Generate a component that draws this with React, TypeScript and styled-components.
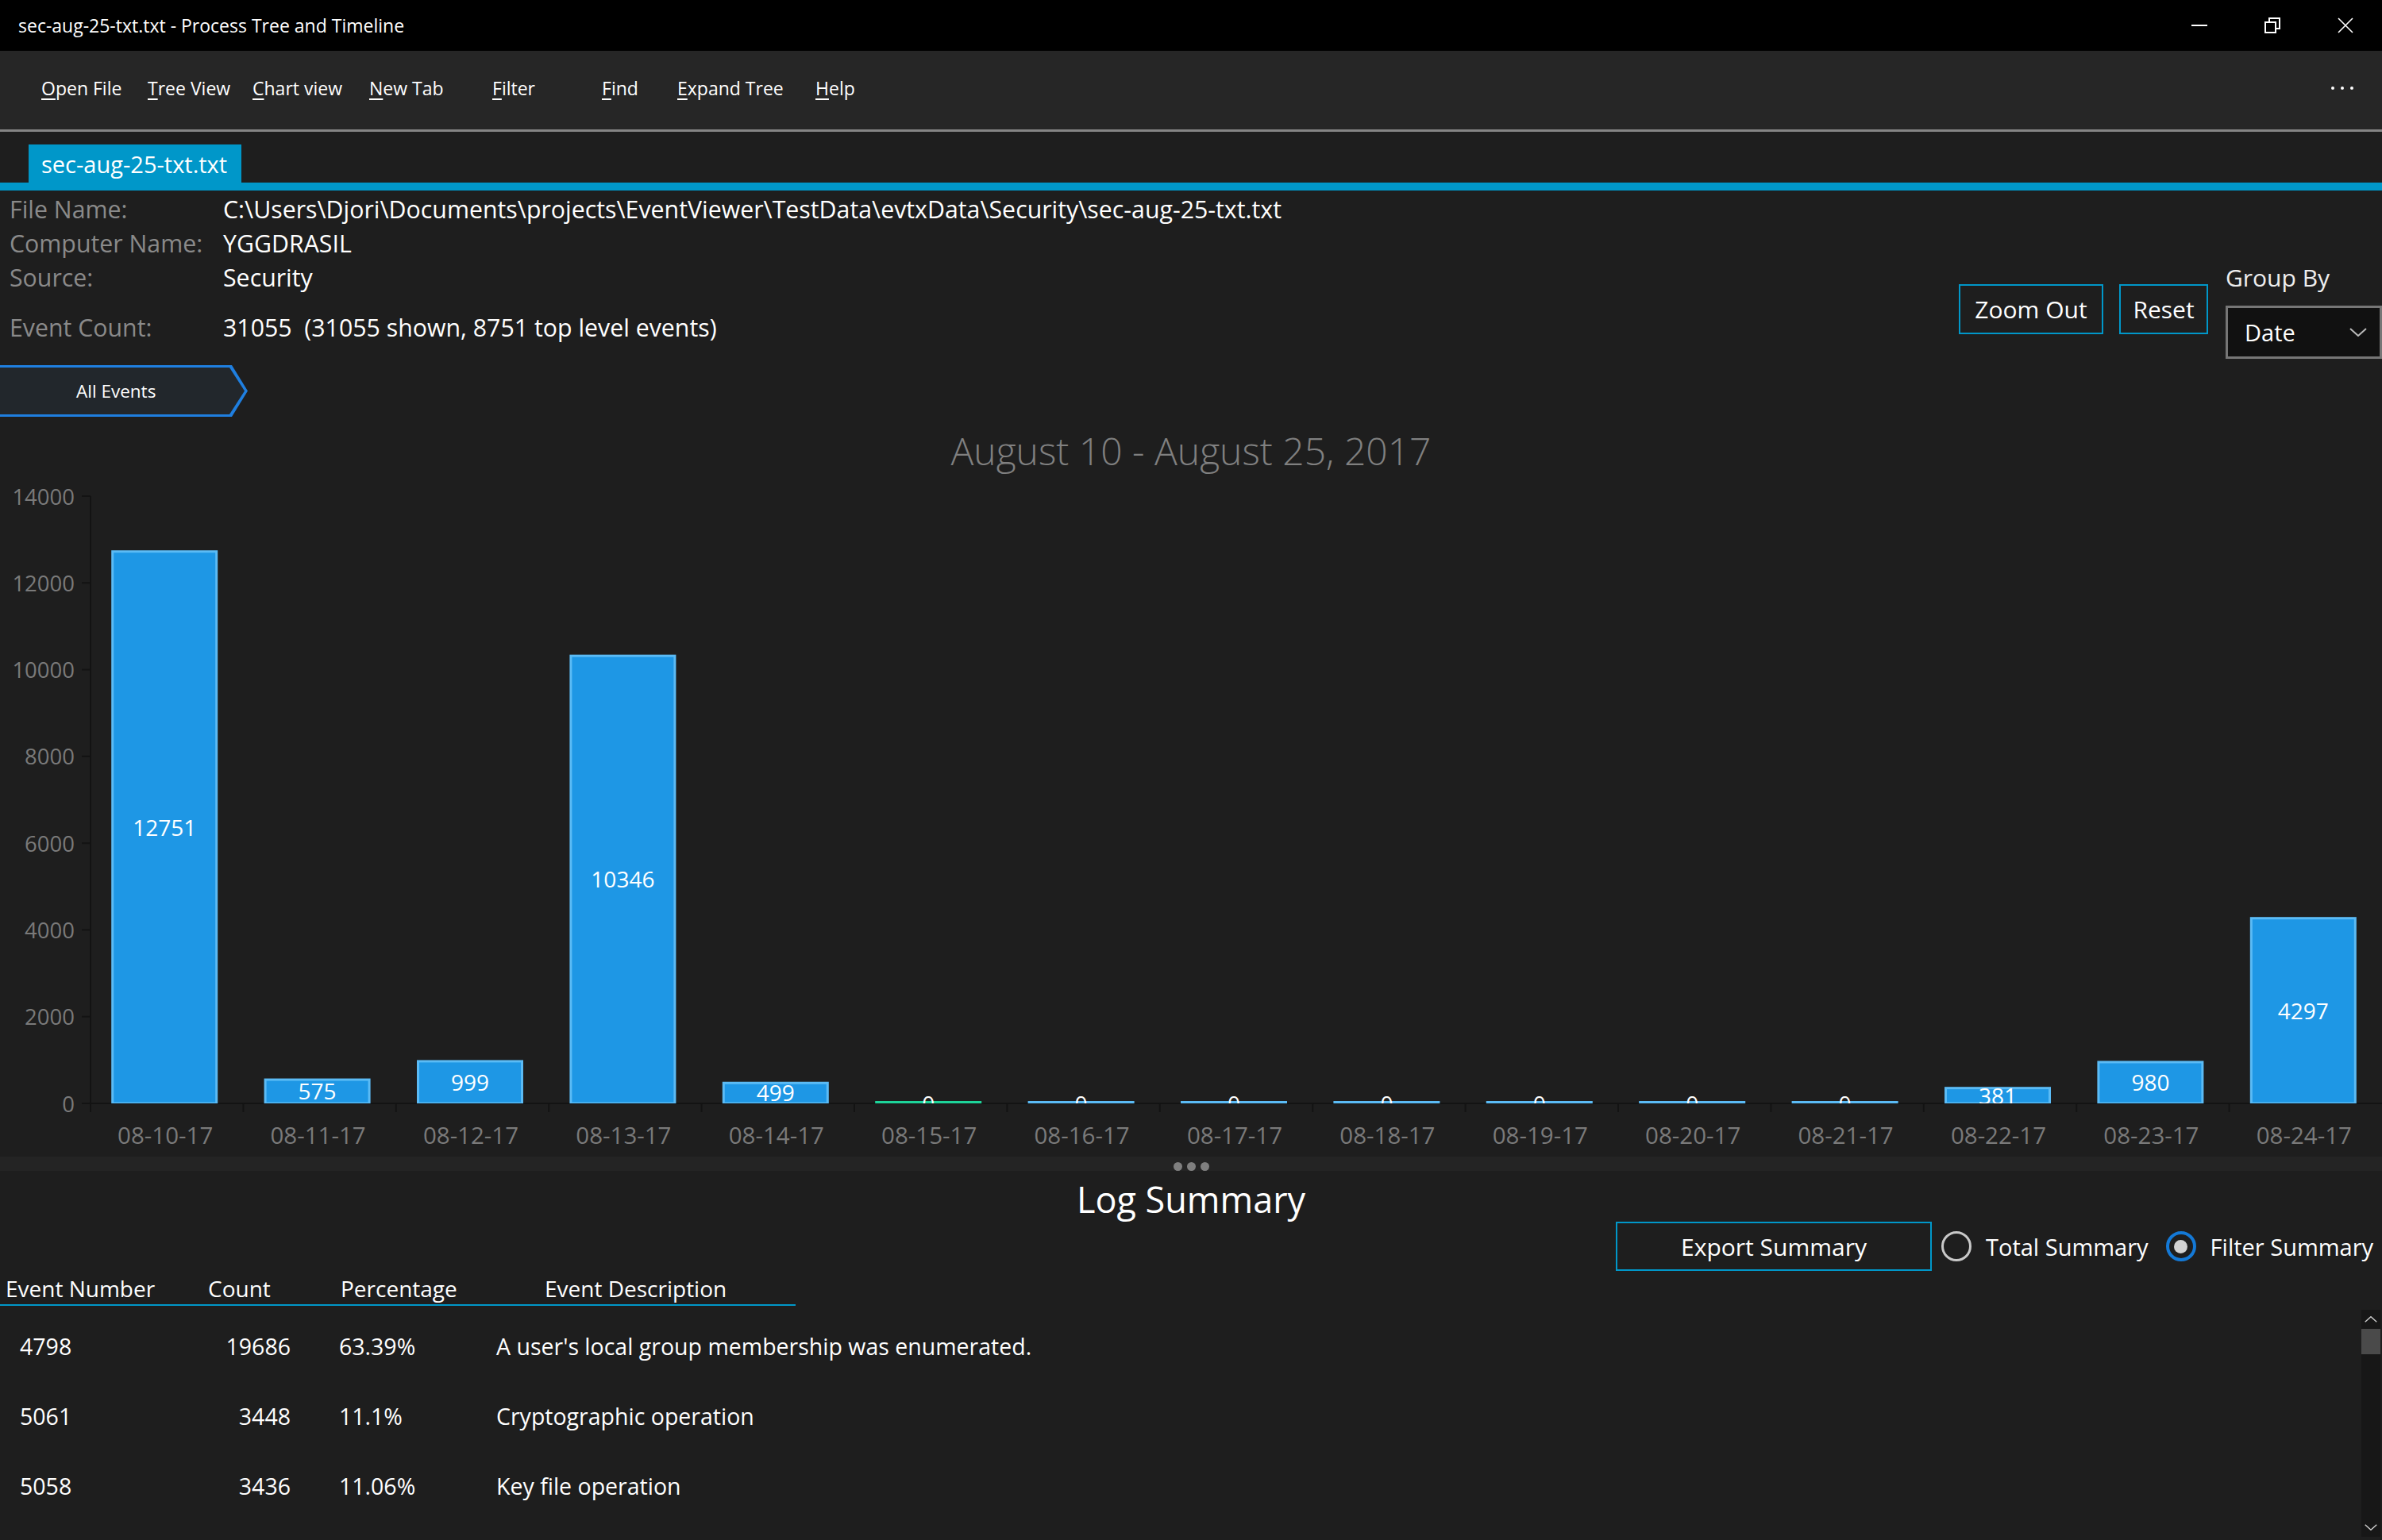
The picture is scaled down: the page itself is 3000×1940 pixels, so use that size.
import * as React from 'react'
import styled, { createGlobalStyle } from 'styled-components'

const GlobalStyle = createGlobalStyle`
  html, body {
    margin: 0;
    padding: 0;
    background: #1e1e1e;
  }
  body {
    font-family: 'Open Sans', 'Noto Sans', sans-serif;
    color: #fff;
  }
`

const Window = styled.div`
  width: 3000px;
  height: 1940px;
  display: flex;
  flex-direction: column;
  background: #1e1e1e;
  overflow: hidden;
`

const TitleBar = styled.div`
  height: 64px;
  flex: none;
  background: #000;
  display: flex;
  align-items: center;
  padding-left: 23px;
`

const TitleText = styled.div`
  flex: 1;
  font-size: 23px;
  color: #fff;
`

const WindowButton = styled.div`
  width: 92px;
  height: 64px;
  display: flex;
  align-items: center;
  justify-content: center;
`

const MenuBar = styled.div`
  height: 102px;
  flex: none;
  background: #262626;
  border-bottom: 3px solid #858585;
  display: flex;
  align-items: center;
  padding: 0 36px 6px 52px;
  box-sizing: border-box;
`

const MenuItem = styled.div<{ width?: number }>`
  width: ${(p) => (p.width ? `${p.width}px` : 'auto')};
  font-size: 23px;
  color: #fff;
  white-space: nowrap;
  u {
    text-underline-offset: 4px;
  }
`

const MoreDots = styled.div`
  margin-left: auto;
  display: flex;
  gap: 8px;
  span {
    width: 4px;
    height: 4px;
    border-radius: 50%;
    background: #fff;
  }
`

const TabStrip = styled.div`
  flex: none;
  padding: 16px 0 0 36px;
`

const Tab = styled.div`
  width: 268px;
  height: 48px;
  background: #0097c9;
  color: #fff;
  font-size: 29px;
  display: flex;
  align-items: center;
  padding-left: 16px;
  box-sizing: border-box;
`

const TabLine = styled.div`
  height: 10px;
  flex: none;
  background: #0097c9;
`

const Header = styled.div`
  flex: none;
  height: 200px;
  display: flex;
  justify-content: space-between;
`

const InfoGrid = styled.div`
  padding: 2px 0 0 12px;
`

const InfoRow = styled.div<{ gapTop?: number }>`
  display: grid;
  grid-template-columns: 269px auto;
  height: 43px;
  align-items: center;
  margin-top: ${(p) => p.gapTop ?? 0}px;
  font-size: 30.3px;
  white-space: nowrap;
`

const InfoLabel = styled.span`
  color: #8a8a8a;
`

const InfoValue = styled.span`
  color: #fff;
`

const Controls = styled.div`
  display: flex;
  align-items: flex-start;
  gap: 20px;
`

const OutlineButton = styled.div<{ width: number; height?: number; top?: number }>`
  flex: none;
  width: ${(p) => p.width}px;
  height: ${(p) => p.height ?? 63}px;
  margin-top: ${(p) => p.top ?? 0}px;
  box-sizing: border-box;
  border: 2px solid #0097c9;
  display: flex;
  align-items: center;
  justify-content: center;
  font-size: 30px;
  color: #fff;
  white-space: nowrap;
`

const GroupColumn = styled.div`
  width: 197px;
  margin-top: 90px;
  margin-left: 2px;
`

const GroupLabel = styled.div`
  height: 40px;
  line-height: 40px;
  font-size: 30px;
  color: #eee;
`

const Combo = styled.div`
  margin-top: 15px;
  height: 67px;
  box-sizing: border-box;
  border: 3px solid #767676;
  background: #111;
  display: flex;
  align-items: center;
  justify-content: space-between;
  padding: 0 16px 0 21px;
  font-size: 29px;
  color: #fff;
`

const Crumb = styled.div`
  flex: none;
  margin-top: 20px;
  width: 312px;
  height: 65px;
  background: #1f7fe0;
  clip-path: polygon(0 0, 292px 0, 312px 50%, 292px 100%, 0 100%);
  padding-top: 3px;
  box-sizing: border-box;
`

const CrumbInner = styled.div`
  width: 308px;
  height: 59px;
  background: #22272c;
  clip-path: polygon(0 0, 289px 0, 308px 50%, 289px 100%, 0 100%);
  display: flex;
  align-items: center;
  padding-left: 96px;
  box-sizing: border-box;
  font-size: 22.5px;
  color: #fff;
`

const ChartTitle = styled.div`
  flex: none;
  margin-top: 13px;
  height: 60px;
  line-height: 60px;
  text-align: center;
  font-size: 48px;
  font-weight: 300;
  color: #808080;
`

const ChartSvg = styled.svg`
  flex: none;
  display: block;
  text {
    font-family: 'Open Sans', 'Noto Sans', sans-serif;
  }
`

const Splitter = styled.div`
  flex: none;
  height: 18px;
  background: #242424;
  display: flex;
  justify-content: center;
  align-items: center;
  gap: 6px;
  overflow: hidden;
  span {
    width: 11px;
    height: 11px;
    border-radius: 50%;
    background: #7f7f7f;
    margin-top: 6px;
  }
`

const SummaryTitle = styled.div`
  flex: none;
  margin-top: 8px;
  height: 56px;
  line-height: 56px;
  text-align: center;
  font-size: 45px;
  color: #fff;
`

const SummaryControls = styled.div`
  flex: none;
  display: flex;
  align-items: center;
  gap: 12px;
  padding-left: 2035px;
  white-space: nowrap;
`

const Radio = styled.div`
  flex: none;
  display: flex;
  align-items: center;
  gap: 18px;
  font-size: 29px;
  color: #fff;
  & + & {
    margin-left: 10px;
  }
`

const RadioCircle = styled.div<{ checked?: boolean }>`
  flex: none;
  width: 38px;
  height: 38px;
  box-sizing: border-box;
  border-radius: 50%;
  border: ${(p) => (p.checked ? '4px solid #1479d6' : '3px solid #c8c8c8')};
  display: flex;
  align-items: center;
  justify-content: center;
  &::after {
    content: '';
    display: ${(p) => (p.checked ? 'block' : 'none')};
    width: 17px;
    height: 17px;
    border-radius: 50%;
    background: #d2d2d2;
  }
`

const TableHeader = styled.div`
  flex: none;
  margin-top: 2px;
  width: 995px;
  height: 40px;
  border-bottom: 2px solid #0097c9;
  display: grid;
  grid-template-columns: 255px 167px 257px auto;
  align-items: center;
  padding-left: 7px;
  box-sizing: content-box;
  font-size: 28px;
  color: #fff;
  white-space: nowrap;
`

const TableBody = styled.div`
  flex: none;
  margin-top: 5px;
  display: flex;
  height: 286px;
`

const Rows = styled.div`
  flex: 1;
  padding-top: 2px;
`

const Row = styled.div`
  display: grid;
  grid-template-columns: 200px 141px 259px 1fr;
  height: 88px;
  align-items: center;
  padding-left: 25px;
  font-size: 28.5px;
  color: #fff;
  white-space: nowrap;
`

const Cell = styled.span<{ align?: 'right'; pad?: number }>`
  text-align: ${(p) => p.align ?? 'left'};
  padding-left: ${(p) => p.pad ?? 0}px;
`

const ScrollBar = styled.div`
  width: 24px;
  margin-right: 2px;
  background: #171717;
  display: flex;
  flex-direction: column;
  align-items: center;
`

const ScrollArrow = styled.div`
  height: 24px;
  display: flex;
  align-items: center;
  justify-content: center;
`

const Thumb = styled.div`
  width: 24px;
  height: 32px;
  background: #4a4a4a;
`

const ScrollTrack = styled.div`
  flex: 1;
`

const menu = [
  { key: 'O', rest: 'pen File', width: 134 },
  { key: 'T', rest: 'ree View', width: 132 },
  { key: 'C', rest: 'hart view', width: 147 },
  { key: 'N', rest: 'ew Tab', width: 155 },
  { key: 'F', rest: 'ilter', width: 138 },
  { key: 'F', rest: 'ind', width: 95 },
  { key: 'E', rest: 'xpand Tree', width: 174 },
  { key: 'H', rest: 'elp' },
]

const data = [
  { date: '08-10-17', count: 12751 },
  { date: '08-11-17', count: 575 },
  { date: '08-12-17', count: 999 },
  { date: '08-13-17', count: 10346 },
  { date: '08-14-17', count: 499 },
  { date: '08-15-17', count: 0, selected: true },
  { date: '08-16-17', count: 0 },
  { date: '08-17-17', count: 0 },
  { date: '08-18-17', count: 0 },
  { date: '08-19-17', count: 0 },
  { date: '08-20-17', count: 0 },
  { date: '08-21-17', count: 0 },
  { date: '08-22-17', count: 381 },
  { date: '08-23-17', count: 980 },
  { date: '08-24-17', count: 4297 },
]

const summary = [
  { id: '4798', count: '19686', pct: '63.39%', desc: "A user's local group membership was enumerated." },
  { id: '5061', count: '3448', pct: '11.1%', desc: 'Cryptographic operation' },
  { id: '5058', count: '3436', pct: '11.06%', desc: 'Key file operation' },
]

const CHART_H = 859
const PLOT_LEFT = 114
const PLOT_RIGHT = 3000
const Y0 = 792
const Y_TOP = 27
const MAX = 14000
const CAT_W = (PLOT_RIGHT - PLOT_LEFT) / data.length
const BAR_W = 134

const yFor = (v: number) => Y0 - ((Y0 - Y_TOP) * v) / MAX

const BarChart: React.FC = () => {
  const ticks = [0, 2000, 4000, 6000, 8000, 10000, 12000, 14000]
  return (
    <ChartSvg width={3000} height={CHART_H} viewBox={`0 0 3000 ${CHART_H}`}>
      <defs>
        <clipPath id="plot">
          <rect x={PLOT_LEFT} y={0} width={PLOT_RIGHT - PLOT_LEFT} height={Y0} />
        </clipPath>
      </defs>
      {ticks.map((t) => (
        <g key={t}>
          <line x1={103} x2={PLOT_LEFT} y1={yFor(t)} y2={yFor(t)} stroke="#131313" strokeWidth={2} />
          <text x={94} y={yFor(t)} fill="#7a7a7a" fontSize={27.5} textAnchor="end" dominantBaseline="central">
            {t}
          </text>
        </g>
      ))}
      <line x1={PLOT_LEFT} x2={PLOT_LEFT} y1={Y_TOP} y2={Y0 + 10} stroke="#131313" strokeWidth={2} />
      <line x1={PLOT_LEFT} x2={PLOT_RIGHT} y1={Y0} y2={Y0} stroke="#131313" strokeWidth={2} />
      {data.map((d, i) => (
        <line
          key={`t${i}`}
          x1={PLOT_LEFT + i * CAT_W}
          x2={PLOT_LEFT + i * CAT_W}
          y1={Y0}
          y2={Y0 + 11}
          stroke="#131313"
          strokeWidth={2}
        />
      ))}
      <g clipPath="url(#plot)">
        {data.map((d, i) => {
          const cx = PLOT_LEFT + (i + 0.5) * CAT_W - 3
          const top = yFor(d.count)
          const h = Math.max(Y0 - top, 3)
          const fill = d.selected ? '#1ed49a' : '#1e97e5'
          const stroke = d.selected ? '#1ed49a' : '#5bbbf5'
          return (
            <g key={d.date}>
              {d.count > 0 ? (
                <rect
                  x={cx - BAR_W / 2 + 1.5}
                  y={top + 1.5}
                  width={BAR_W - 3}
                  height={h - 1.5}
                  fill={fill}
                  stroke={stroke}
                  strokeWidth={3}
                />
              ) : (
                <rect x={cx - BAR_W / 2} y={Y0 - 3} width={BAR_W} height={3} fill={stroke} />
              )}
              <text
                x={cx}
                y={Y0 - (Y0 - top) / 2}
                fill="#fff"
                fontSize={28}
                textAnchor="middle"
                dominantBaseline="central"
              >
                {d.count}
              </text>
            </g>
          )
        })}
      </g>
      {data.map((d, i) => (
        <text
          key={`l${i}`}
          x={PLOT_LEFT + (i + 0.5) * CAT_W - 2}
          y={831}
          fill="#7a7a7a"
          fontSize={29.5}
          textAnchor="middle"
          dominantBaseline="central"
        >
          {d.date}
        </text>
      ))}
    </ChartSvg>
  )
}

const Chevron: React.FC<{ up?: boolean; size?: number; color?: string }> = ({ up, size = 22, color = '#ccc' }) => (
  <svg width={size} height={size / 2} viewBox="0 0 22 11">
    <polyline
      points={up ? '1,10 11,1 21,10' : '1,1 11,10 21,1'}
      fill="none"
      stroke={color}
      strokeWidth={2}
    />
  </svg>
)

export default function App() {
  return (
    <>
      <GlobalStyle />
      <Window>
        <TitleBar>
          <TitleText>sec-aug-25-txt.txt - Process Tree and Timeline</TitleText>
          <WindowButton>
            <svg width={20} height={20} viewBox="0 0 20 20">
              <line x1={0} x2={20} y1={10} y2={10} stroke="#fff" strokeWidth={2} />
            </svg>
          </WindowButton>
          <WindowButton>
            <svg width={20} height={20} viewBox="0 0 20 20">
              <rect x={1} y={6} width={13} height={13} fill="none" stroke="#fff" strokeWidth={2} />
              <path d="M6 6 V1 H19 V14 H14" fill="none" stroke="#fff" strokeWidth={2} />
            </svg>
          </WindowButton>
          <WindowButton>
            <svg width={20} height={20} viewBox="0 0 20 20">
              <path d="M1 1 L19 19 M19 1 L1 19" stroke="#fff" strokeWidth={1.6} />
            </svg>
          </WindowButton>
        </TitleBar>

        <MenuBar>
          {menu.map((m, i) => (
            <MenuItem key={i} width={m.width}>
              <u>{m.key}</u>
              {m.rest}
            </MenuItem>
          ))}
          <MoreDots>
            <span />
            <span />
            <span />
          </MoreDots>
        </MenuBar>

        <TabStrip>
          <Tab>sec-aug-25-txt.txt</Tab>
        </TabStrip>
        <TabLine />

        <Header>
          <InfoGrid>
            <InfoRow>
              <InfoLabel>File Name:</InfoLabel>
              <InfoValue>
                C:\Users\Djori\Documents\projects\EventViewer\TestData\evtxData\Security\sec-aug-25-txt.txt
              </InfoValue>
            </InfoRow>
            <InfoRow>
              <InfoLabel>Computer Name:</InfoLabel>
              <InfoValue>YGGDRASIL</InfoValue>
            </InfoRow>
            <InfoRow>
              <InfoLabel>Source:</InfoLabel>
              <InfoValue>Security</InfoValue>
            </InfoRow>
            <InfoRow gapTop={20}>
              <InfoLabel>Event Count:</InfoLabel>
              <InfoValue>31055&nbsp;&nbsp;(31055 shown, 8751 top level events)</InfoValue>
            </InfoRow>
          </InfoGrid>
          <Controls>
            <OutlineButton width={182} top={118}>
              Zoom Out
            </OutlineButton>
            <OutlineButton width={112} top={118}>
              Reset
            </OutlineButton>
            <GroupColumn>
              <GroupLabel>Group By</GroupLabel>
              <Combo>
                Date
                <Chevron size={22} color="#bbb" />
              </Combo>
            </GroupColumn>
          </Controls>
        </Header>

        <Crumb>
          <CrumbInner>All Events</CrumbInner>
        </Crumb>

        <ChartTitle>August 10 - August 25, 2017</ChartTitle>
        <BarChart />

        <Splitter>
          <span />
          <span />
          <span />
        </Splitter>

        <SummaryTitle>Log Summary</SummaryTitle>
        <SummaryControls>
          <OutlineButton width={398} height={62}>
            Export Summary
          </OutlineButton>
          <Radio>
            <RadioCircle />
            Total Summary
          </Radio>
          <Radio>
            <RadioCircle checked />
            Filter Summary
          </Radio>
        </SummaryControls>

        <TableHeader>
          <span>Event Number</span>
          <span>Count</span>
          <span>Percentage</span>
          <span>Event Description</span>
        </TableHeader>
        <TableBody>
          <Rows>
            {summary.map((r) => (
              <Row key={r.id}>
                <Cell>{r.id}</Cell>
                <Cell align="right">{r.count}</Cell>
                <Cell pad={61}>{r.pct}</Cell>
                <Cell>{r.desc}</Cell>
              </Row>
            ))}
          </Rows>
          <ScrollBar>
            <ScrollArrow>
              <Chevron up size={16} />
            </ScrollArrow>
            <Thumb />
            <ScrollTrack />
            <ScrollArrow>
              <Chevron size={16} />
            </ScrollArrow>
          </ScrollBar>
        </TableBody>
      </Window>
    </>
  )
}
